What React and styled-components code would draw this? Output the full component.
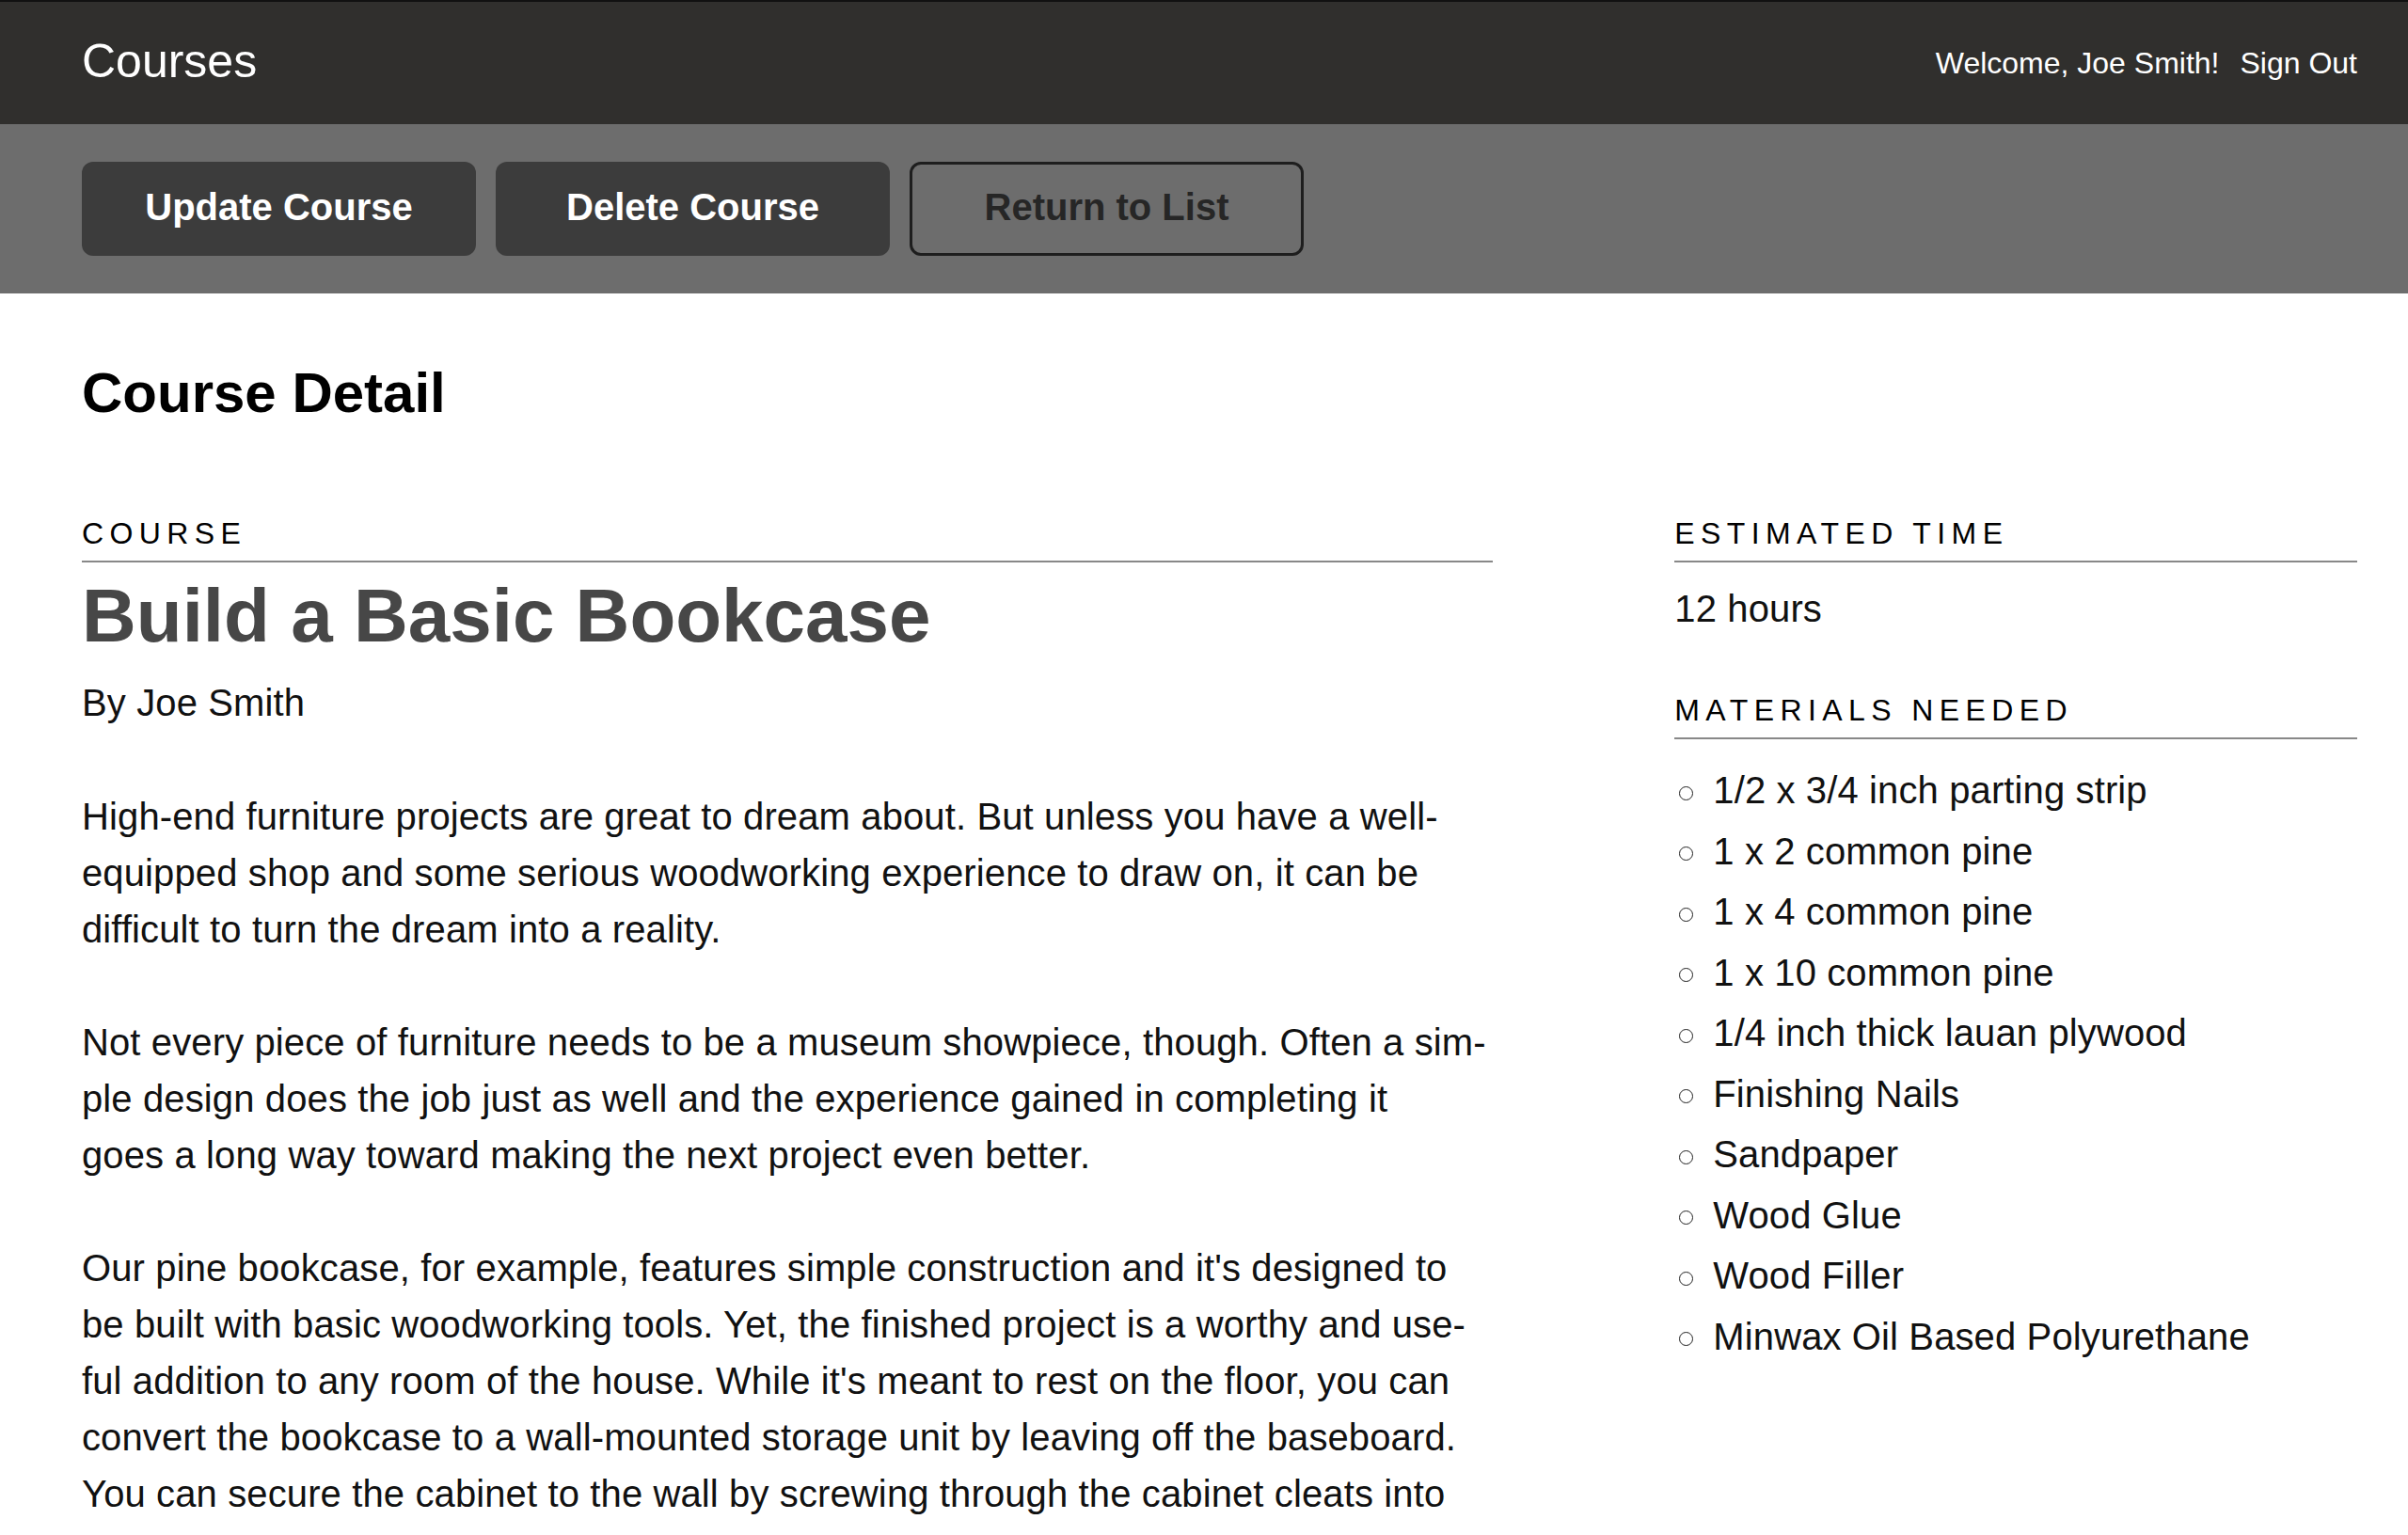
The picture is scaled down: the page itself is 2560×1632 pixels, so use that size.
import React from "react";
import styled, { createGlobalStyle } from "styled-components";

const GlobalStyle = createGlobalStyle`
  html, body {
    margin: 0;
    padding: 0;
    background: #ffffff;
  }
  body {
    font-family: "Liberation Sans", Arial, Helvetica, sans-serif;
    color: #111111;
    -webkit-font-smoothing: antialiased;
  }
  * { box-sizing: border-box; }
`;

const Header = styled.header`
  display: flex;
  align-items: center;
  justify-content: space-between;
  height: 132px;
  padding: 0 54px 0 87px;
  background: #302f2d;
  border-top: 2px solid #111111;
  color: #ffffff;
`;

const Brand = styled.h1`
  margin: 0 0 3px;
  font-size: 50px;
  font-weight: 400;
  line-height: 1.15;
  color: #ffffff;
`;

const Nav = styled.nav`
  display: flex;
  align-items: center;
  gap: 22px;
  font-size: 32px;
  line-height: 1.15;
`;

const NavLink = styled.a`
  color: #ffffff;
  text-decoration: none;
`;

const ActionBar = styled.div`
  display: flex;
  gap: 21px;
  padding: 40px 87px;
  background: #6d6d6d;
`;

const Button = styled.a`
  display: flex;
  align-items: center;
  justify-content: center;
  width: 419px;
  height: 100px;
  padding-bottom: 4px;
  border-radius: 12px;
  font-size: 40px;
  font-weight: 700;
  text-decoration: none;
  background: ${(p) => (p.$outline ? "transparent" : "#3c3c3c")};
  color: ${(p) => (p.$outline ? "#262626" : "#ffffff")};
  border: ${(p) => (p.$outline ? "3px solid #1e1e1e" : "none")};
`;

const Main = styled.main`
  padding: 0 54px 0 87px;
`;

const PageTitle = styled.h2`
  margin: 70px 0 0;
  font-size: 60px;
  line-height: 72px;
  font-weight: 700;
  color: #000000;
`;

const DetailGrid = styled.div`
  display: grid;
  grid-template-columns: 62% 30%;
  justify-content: space-between;
  margin-top: 93px;
`;

const Column = styled.section`
  display: flex;
  flex-direction: column;
`;

const Label = styled.h3`
  margin: ${(p) => (p.$spaced ? "58px 0 0" : "0")};
  padding-bottom: 9px;
  border-bottom: 2px solid #888888;
  font-size: 32px;
  line-height: 40px;
  font-weight: 400;
  letter-spacing: 0.2em;
  text-transform: uppercase;
  color: #000000;
`;

const CourseTitle = styled.h4`
  margin: 13px 0 0;
  font-size: 80px;
  line-height: 88px;
  font-weight: 700;
  color: #474747;
`;

const Body = styled.p`
  margin: ${(p) => p.$margin || "0"};
  font-size: 40px;
  line-height: 60px;
  letter-spacing: 0.12px;
  color: #111111;
`;

const Description = styled.div`
  margin-top: 61px;
`;

const MaterialsList = styled.ul`
  margin: 22px 0 0;
  padding: 0;
  list-style: none;
`;

const Material = styled.li`
  display: flex;
  align-items: center;
  font-size: 40px;
  line-height: 64.5px;
  letter-spacing: 0.12px;
  color: #111111;

  &::before {
    content: "";
    flex: none;
    width: 13px;
    height: 13px;
    margin: 6px 21px 0 5px;
    border: 1.3px solid #222222;
    border-radius: 50%;
  }
`;

const materials = [
  "1/2 x 3/4 inch parting strip",
  "1 x 2 common pine",
  "1 x 4 common pine",
  "1 x 10 common pine",
  "1/4 inch thick lauan plywood",
  "Finishing Nails",
  "Sandpaper",
  "Wood Glue",
  "Wood Filler",
  "Minwax Oil Based Polyurethane",
];

export default function App() {
  return (
    <>
      <GlobalStyle />
      <Header>
        <Brand>Courses</Brand>
        <Nav>
          <span>Welcome, Joe Smith!</span>
          <NavLink href="#">Sign Out</NavLink>
        </Nav>
      </Header>
      <ActionBar>
        <Button href="#">Update Course</Button>
        <Button href="#">Delete Course</Button>
        <Button href="#" $outline>
          Return to List
        </Button>
      </ActionBar>
      <Main>
        <PageTitle>Course Detail</PageTitle>
        <DetailGrid>
          <Column>
            <Label>Course</Label>
            <CourseTitle>Build a Basic Bookcase</CourseTitle>
            <Body $margin="18px 0 0">By Joe Smith</Body>
            <Description>
              <Body $margin="0 0 60px">
                High-end furniture projects are great to dream about. But unless you have a
                well-equipped shop and some serious woodworking experience to draw on, it can
                be difficult to turn the dream into a reality.
              </Body>
              <Body $margin="0 0 60px">
                Not every piece of furniture needs to be a museum showpiece, though. Often a
                sim&shy;ple design does the job just as well and the experience gained in
                completing it goes&nbsp;a long way toward making the next project even better.
              </Body>
              <Body $margin="0 0 60px">
                Our pine bookcase, for example, features simple construction and it's designed
                to be&nbsp;built with basic woodworking tools. Yet, the finished project is a
                worthy and use&shy;ful&nbsp;addition to any room of the house. While it's meant
                to rest on the floor, you can convert the bookcase to a wall-mounted storage unit
                by leaving off the baseboard. You can secure the cabinet to the wall by screwing
                through the cabinet cleats into the wall studs.
              </Body>
              <Body $margin="0 0 60px">
                We've also added crown molding to the top of the bookcase. It's a simple touch
                that gives the finished piece a more refined, custom look.
              </Body>
            </Description>
          </Column>
          <Column>
            <Label>Estimated Time</Label>
            <Body $margin="19px 0 0">12 hours</Body>
            <Label $spaced>Materials Needed</Label>
            <MaterialsList>
              {materials.map((m) => (
                <Material key={m}>{m}</Material>
              ))}
            </MaterialsList>
          </Column>
        </DetailGrid>
      </Main>
    </>
  );
}
